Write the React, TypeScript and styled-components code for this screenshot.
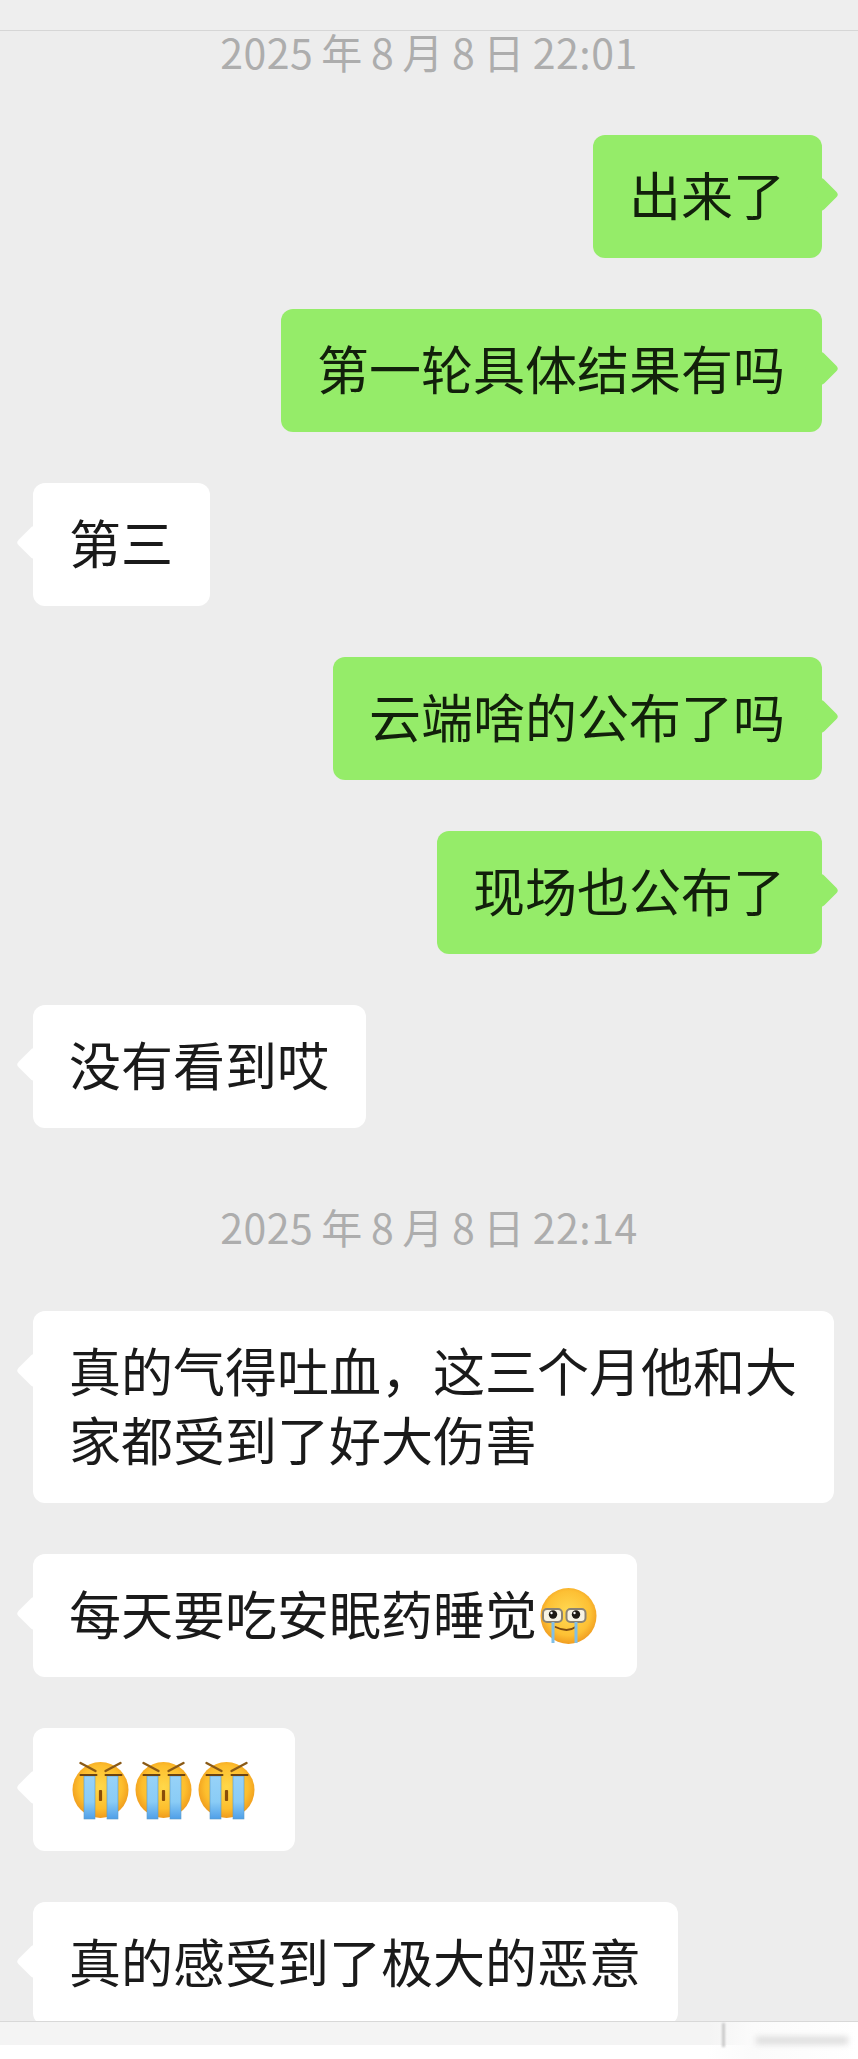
import React from 'react';
import styled, { createGlobalStyle } from 'styled-components';

const GlobalStyle = createGlobalStyle`
	html, body {
		margin: 0;
		padding: 0;
		background: #ededed;
	}
`;

type Side = 'left' | 'right';

const Page = styled.div`
	width: 858px;
	height: 2059px;
	display: flex;
	flex-direction: column;
	overflow: hidden;
	background: #ededed;
	font-family: 'Noto Sans CJK SC', 'Noto Sans', sans-serif;
`;

const TopBar = styled.div`
	height: 30px;
	flex-shrink: 0;
	background: #eeeeee;
	border-bottom: 1px solid #d6d6d6;
`;

const Thread = styled.div`
	flex: 1;
	min-height: 0;
	display: flex;
	flex-direction: column;
	gap: 51px;
	padding: 0 24px 0 33px;
`;

const TimeRow = styled.div<{ $above: number; $below: number }>`
	margin: ${(p) => p.$above}px 9px ${(p) => p.$below}px 0;
	height: 50px;
	line-height: 40px;
	flex-shrink: 0;
	text-align: center;
	font-size: 41px;
	letter-spacing: 0.5px;
	word-spacing: -1.6px;
	color: #adadad;
`;

const Row = styled.div<{ $side: Side }>`
	display: flex;
	flex-shrink: 0;
	justify-content: ${(p) => (p.$side === 'right' ? 'flex-end' : 'flex-start')};
	padding-right: ${(p) => (p.$side === 'right' ? 12 : 0)}px;
`;

const Bubble = styled.div<{ $side: Side }>`
	position: relative;
	box-sizing: border-box;
	max-width: 801px;
	padding: 24px 37px 30px 36px;
	border-radius: 12px;
	background: ${(p) => (p.$side === 'right' ? '#95ec69' : '#ffffff')};
	color: ${(p) => (p.$side === 'right' ? '#12200b' : '#1a1a1a')};
	font-size: 52px;
	line-height: 69px;

	&::before {
		content: '';
		position: absolute;
		top: 47px;
		${(p) => (p.$side === 'right' ? 'right: -12px;' : 'left: -12px;')}
		width: 25px;
		height: 25px;
		border-radius: 4px;
		background: inherit;
		transform: rotate(45deg);
	}
`;

const EmojiSvg = styled.svg`
	display: inline-block;
	vertical-align: -11px;
`;

const Footer = styled.div`
	position: relative;
	flex-shrink: 0;
	height: 37px;
	background: #ffffff;
	border-top: 1px solid #d8d8d8;
`;

const FooterStrip = styled.div`
	height: 23px;
	background: #f4f4f4;
`;

const WatermarkFade = styled.div`
	position: absolute;
	top: 0;
	right: 0;
	bottom: 0;
	width: 150px;
	background: linear-gradient(to right, rgba(255, 255, 255, 0), #fbfbfb 30%, #ffffff);
`;

const WatermarkMark = styled.div`
	position: absolute;
	top: 1px;
	left: 722px;
	width: 3px;
	height: 24px;
	background: #c9c9c9;
	filter: blur(1px);
`;

const WatermarkText = styled.div`
	position: absolute;
	top: 15px;
	right: 10px;
	width: 92px;
	height: 7px;
	background: #d9d9d9;
	filter: blur(3px);
`;

const CryingFace = () => (
	<EmojiSvg width="63" height="60" viewBox="8.5 10 63 60">
		<defs>
			<radialGradient id="cryFace" cx="50%" cy="45%" r="55%">
				<stop offset="0%" stopColor="#ffd84a" />
				<stop offset="70%" stopColor="#fdbe2d" />
				<stop offset="100%" stopColor="#ef9a1c" />
			</radialGradient>
			<linearGradient id="cryTear" x1="0" y1="0" x2="0" y2="1">
				<stop offset="0%" stopColor="#97d2f8" />
				<stop offset="60%" stopColor="#8accf6" />
				<stop offset="100%" stopColor="#4f9fe8" />
			</linearGradient>
		</defs>
		<circle cx="40" cy="40" r="28" fill="url(#cryFace)" />
		<path d="M20 13 L35 21 M60 13 L45 21" stroke="#8a5a16" strokeWidth="2.4" strokeLinecap="round" />
		<rect x="23.5" y="26" width="11" height="43" fill="url(#cryTear)" stroke="#5b9ac9" strokeWidth="0.6" />
		<rect x="46.5" y="26" width="11" height="43" fill="url(#cryTear)" stroke="#5b9ac9" strokeWidth="0.6" />
		<path d="M20 25 H36 M45 25 H61" stroke="#6d4310" strokeWidth="2" strokeLinecap="round" />
		<rect x="38.4" y="40" width="3.2" height="11" rx="1" fill="#8a4d08" />
	</EmojiSvg>
);

const TearfulFace = () => (
	<EmojiSvg width="63" height="60" viewBox="17.5 5 63 60">
		<defs>
			<radialGradient id="tearFace" cx="50%" cy="45%" r="55%">
				<stop offset="0%" stopColor="#ffdb55" />
				<stop offset="72%" stopColor="#fdc034" />
				<stop offset="100%" stopColor="#f09c20" />
			</radialGradient>
		</defs>
		<circle cx="49" cy="35" r="28" fill="url(#tearFace)" />
		<path d="M36 46 Q48 52 56 46" stroke="#7c4a10" strokeWidth="1.8" fill="none" strokeLinecap="round" />
		<rect x="23.5" y="28" width="19" height="13" rx="4" fill="#f7f3e4" stroke="#8b8373" strokeWidth="2" />
		<rect x="47" y="28" width="19" height="13" rx="4" fill="#f7f3e4" stroke="#8b8373" strokeWidth="2" />
		<circle cx="33.5" cy="33.5" r="4.2" fill="#1e1a14" />
		<circle cx="56.5" cy="33.5" r="4.2" fill="#1e1a14" />
		<circle cx="32" cy="32" r="1.2" fill="#ffffff" />
		<circle cx="55" cy="32" r="1.2" fill="#ffffff" />
		<path d="M33.5 41 V62 M56.5 41 V62" stroke="#7fbfe8" strokeWidth="3" />
	</EmojiSvg>
);

const Message = ({ side, children }: { side: Side; children: React.ReactNode }) => (
	<Row $side={side}>
		<Bubble $side={side}>{children}</Bubble>
	</Row>
);

const App = () => (
	<Page>
		<GlobalStyle />
		<TopBar />
		<Thread>
			<TimeRow $above={0} $below={3}>2025 年 8 月 8 日 22:01</TimeRow>
			<Message side="right">出来了</Message>
			<Message side="right">第一轮具体结果有吗</Message>
			<Message side="left">第三</Message>
			<Message side="right">云端啥的公布了吗</Message>
			<Message side="right">现场也公布了</Message>
			<Message side="left">没有看到哎</Message>
			<TimeRow $above={27} $below={4}>2025 年 8 月 8 日 22:14</TimeRow>
			<Message side="left">真的气得吐血，这三个月他和大家都受到了好大伤害</Message>
			<Message side="left">每天要吃安眠药睡觉<TearfulFace /></Message>
			<Message side="left"><CryingFace /><CryingFace /><CryingFace /></Message>
			<Message side="left">真的感受到了极大的恶意</Message>
		</Thread>
		<Footer>
			<FooterStrip />
			<WatermarkFade />
			<WatermarkMark />
			<WatermarkText />
		</Footer>
	</Page>
);

export default App;
